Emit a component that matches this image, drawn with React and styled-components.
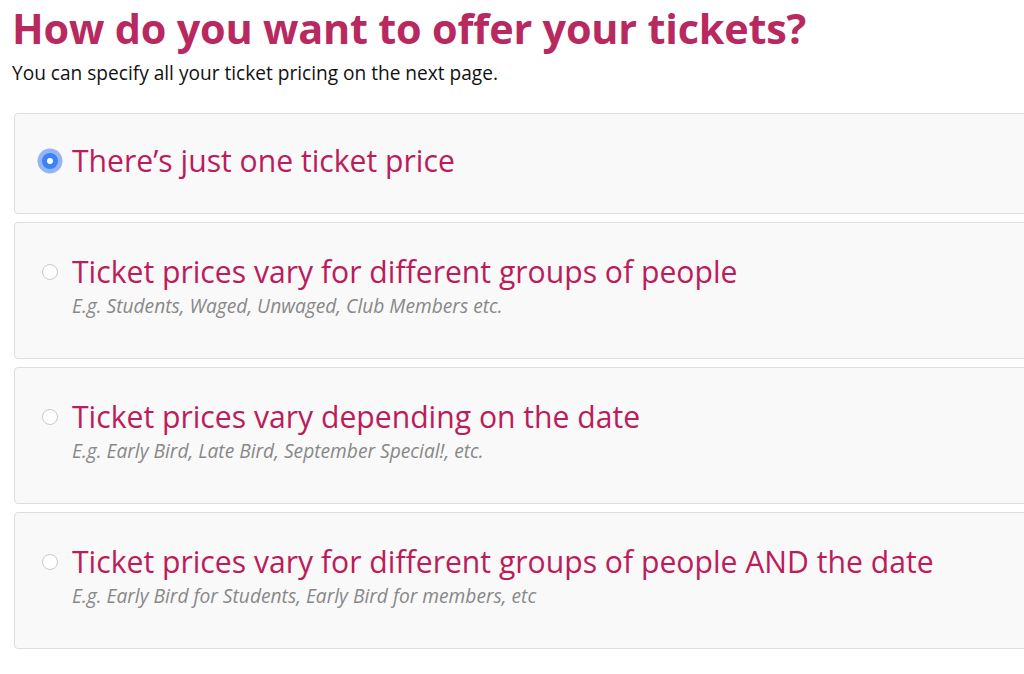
import React, { useState } from 'react';
import styled, { createGlobalStyle } from 'styled-components';

const GlobalStyle = createGlobalStyle`
  html, body {
    margin: 0;
    padding: 0;
    background: #ffffff;
    overflow: hidden;
  }
  body {
    font-family: 'Open Sans', 'Noto Sans', sans-serif;
  }
`;

const Page = styled.div`
  padding: 0 0 0 12px;
  width: 1100px;
`;

const Heading = styled.h1`
  margin: 0;
  padding-top: 2px;
  font-size: 41.4px;
  line-height: 52px;
  font-weight: 700;
  color: #b8295f;
  letter-spacing: -0.2px;
`;

const Lead = styled.p`
  margin: 6px 0 0 0;
  font-size: 19.1px;
  line-height: 26px;
  color: #111;
`;

const OptionList = styled.div`
  display: flex;
  flex-direction: column;
  gap: 7.5px;
  margin: 27px 0 0 2px;
`;

const OptionCard = styled.label`
  display: flex;
  align-items: flex-start;
  gap: 10px;
  padding: ${p => (p.hint ? '29px 26px 39.5px 23px' : '27px 26px 32px 23px')};
  background: #f9f9f9;
  border: 1px solid #dedede;
  border-radius: 4px;
  cursor: pointer;
`;

const RadioSlot = styled.span`
  flex: 0 0 24px;
  height: 40px;
  display: flex;
  align-items: center;
  justify-content: center;
`;

const Radio = styled.span`
  box-sizing: border-box;
  display: block;
  width: 16px;
  height: 16px;
  border-radius: 50%;
  position: relative;
  ${p =>
    p.checked
      ? `
    background: #3b82f6;
    box-shadow: 0 0 0 4.5px #93b4f5;
    &::after {
      content: '';
      position: absolute;
      left: 50%;
      top: 50%;
      width: 6px;
      height: 6px;
      margin: -3px 0 0 -3px;
      border-radius: 50%;
      background: #fff;
    }
  `
      : `
    background: #fff;
    border: 1px solid #c9c9c9;
  `}
`;

const OptionText = styled.div`
  display: flex;
  flex-direction: column;
`;

const OptionTitle = styled.span`
  font-size: 30.15px;
  line-height: 40px;
  color: #bc1c5b;
`;

const OptionHint = styled.span`
  margin-top: 1px;
  font-size: 19.2px;
  line-height: 26px;
  font-style: italic;
  color: #888;
`;

const options = [
  { id: 'single', title: 'There’s just one ticket price' },
  {
    id: 'groups',
    title: 'Ticket prices vary for different groups of people',
    hint: 'E.g. Students, Waged, Unwaged, Club Members etc.'
  },
  {
    id: 'date',
    title: 'Ticket prices vary depending on the date',
    hint: 'E.g. Early Bird, Late Bird, September Special!, etc.'
  },
  {
    id: 'both',
    title: 'Ticket prices vary for different groups of people AND the date',
    hint: 'E.g. Early Bird for Students, Early Bird for members, etc'
  }
];

const App = () => {
  const [selected, setSelected] = useState('single');

  return (
    <Page>
      <GlobalStyle />
      <Heading>How do you want to offer your tickets?</Heading>
      <Lead>You can specify all your ticket pricing on the next page.</Lead>

      <OptionList>
        {options.map(option => (
          <OptionCard
            key={option.id}
            hint={option.hint ? 1 : 0}
            onClick={() => setSelected(option.id)}
          >
            <RadioSlot>
              <Radio checked={selected === option.id} />
            </RadioSlot>
            <OptionText>
              <OptionTitle>{option.title}</OptionTitle>
              {option.hint && <OptionHint>{option.hint}</OptionHint>}
            </OptionText>
          </OptionCard>
        ))}
      </OptionList>
    </Page>
  );
};

export default App;
